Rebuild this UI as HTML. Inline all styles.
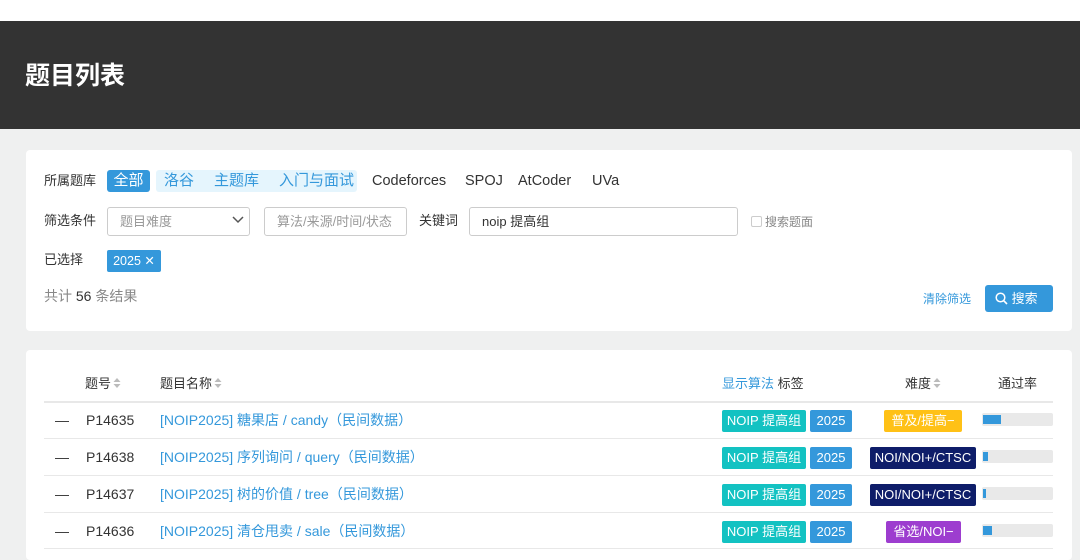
<!DOCTYPE html>
<html><head><meta charset="utf-8"><style>
*{margin:0;padding:0;box-sizing:border-box}
body{width:1080px;height:549px;overflow:hidden;background:#eff0f0;font-family:"Liberation Sans","Noto Sans CJK SC",sans-serif;position:relative;color:#333}
.a{position:absolute;white-space:nowrap;line-height:20px}
.hd{left:0;top:21px;width:1080px;height:108px;background:#333}
.card{background:#fff;border-radius:4px;position:absolute}
.lbl{font-size:13px;color:#333}
.bl{color:#3498db}
.tag{position:absolute;height:22px;line-height:22px;font-size:13px;color:#fff;border-radius:2px;text-align:center}
.inp{position:absolute;border:1px solid #ccc;border-radius:3px;height:29px;line-height:27px;font-size:13px;padding-left:12px;color:#999}
.line{position:absolute;left:44px;width:1009px;height:1px;background:#e8e8e8}
.row{font-size:14px}
.bar{position:absolute;left:982px;width:71px;height:13px;background:#e9e9e9;border-radius:2px}
.bar i{position:absolute;left:1px;top:2px;height:9px;background:#3498db}
.sort{display:inline-block;width:8px;height:12px;vertical-align:-1px;margin-left:2px}
</style></head><body>
<div class="a" style="left:0;top:0;width:1080px;height:21px;background:#fff"></div>
<div class="a hd"></div>
<div class="a" style="left:25px;top:61px;font-size:25px;line-height:30px;font-weight:bold;color:#fff">题目列表</div>

<div class="card" style="left:26px;top:150px;width:1046px;height:181px"></div>
<div class="a lbl" style="left:44px;top:171px">所属题库</div>
<div class="a" style="left:107px;top:170px;width:43px;height:22px;background:#3498db;border-radius:3px;color:#fff;font-size:15px;line-height:22px;text-align:center">全部</div>
<div class="a" style="left:156px;top:170px;width:201px;height:22px;background:#e5f5fd;border-radius:3px"></div>
<div class="a bl" style="left:164px;top:171px;font-size:15px">洛谷</div>
<div class="a bl" style="left:214px;top:171px;font-size:15px">主题库</div>
<div class="a bl" style="left:279px;top:171px;font-size:15px">入门与面试</div>
<div class="a" style="left:372px;top:171px;font-size:14.5px;color:#333">Codeforces</div>
<div class="a" style="left:465px;top:171px;font-size:14.5px;color:#333">SPOJ</div>
<div class="a" style="left:518px;top:171px;font-size:14.5px;color:#333">AtCoder</div>
<div class="a" style="left:592px;top:171px;font-size:14.5px;color:#333">UVa</div>

<div class="a lbl" style="left:44px;top:211px">筛选条件</div>
<div class="inp" style="left:107px;top:207px;width:143px;padding-left:12px">题目难度</div>
<svg class="a" style="left:232px;top:215px" width="12" height="10"><path d="M1 2l5 5 5-5" stroke="#555" stroke-width="1.5" fill="none"/></svg>
<div class="inp" style="left:264px;top:207px;width:143px">算法/来源/时间/状态</div>
<div class="a lbl" style="left:419px;top:211px">关键词</div>
<div class="inp" style="left:469px;top:207px;width:269px;color:#333">noip 提高组</div>
<div class="a" style="left:751px;top:216px;width:11px;height:11px;border:1px solid #ccc;border-radius:2px"></div>
<div class="a" style="left:765px;top:212px;font-size:12px;color:#888">搜索题面</div>

<div class="a lbl" style="left:44px;top:250px">已选择</div>
<div class="tag" style="left:107px;top:250px;width:54px;background:#3498db;font-size:12.5px">2025 ✕</div>
<div class="a" style="left:44px;top:286px;font-size:14px;color:#888">共计 <span style="color:#333">56</span> 条结果</div>
<div class="a bl" style="left:923px;top:289px;font-size:12px">清除筛选</div>
<div class="a" style="left:985px;top:285px;width:68px;height:27px;background:#3498db;border-radius:3px;color:#fff;font-size:13px;line-height:27px;padding-left:10px"><svg width="13" height="13" style="vertical-align:-2px"><circle cx="5.5" cy="5.5" r="4.3" stroke="#fff" stroke-width="1.5" fill="none"/><path d="M8.6 8.6l3.4 3.4" stroke="#fff" stroke-width="1.6"/></svg> 搜索</div>

<div class="card" style="left:26px;top:350px;width:1046px;height:210px"></div>
<svg width="0" height="0" style="position:absolute"><defs><g id="s"><path d="M4 1l3.5 4h-7z M4 11l3.5-4h-7z" fill="#bbb"/></g></defs></svg>
<div class="a" style="left:85px;top:374px;font-size:13px">题号<svg class="sort" viewBox="0 0 8 12"><use href="#s"/></svg></div>
<div class="a" style="left:160px;top:374px;font-size:13px">题目名称<svg class="sort" viewBox="0 0 8 12"><use href="#s"/></svg></div>
<div class="a" style="left:722px;top:374px;font-size:13px"><span class="bl">显示算法</span> 标签</div>
<div class="a" style="left:905px;top:374px;font-size:13px">难度<svg class="sort" viewBox="0 0 8 12"><use href="#s"/></svg></div>
<div class="a" style="left:998px;top:374px;font-size:13px">通过率</div>
<div class="line" style="top:401px;height:2px"></div>
<div class="line" style="top:438px"></div>
<div class="line" style="top:475px"></div>
<div class="line" style="top:512px"></div>
<div class="line" style="top:548px"></div>

<div class="a row" style="left:55px;top:410px">—</div><div class="a row" style="left:86px;top:410px">P14635</div><div class="a row bl" style="left:160px;top:410px">[NOIP2025] 糖果店 / candy（民间数据）</div>
<div class="a row" style="left:55px;top:447px">—</div><div class="a row" style="left:86px;top:447px">P14638</div><div class="a row bl" style="left:160px;top:447px">[NOIP2025] 序列询问 / query（民间数据）</div>
<div class="a row" style="left:55px;top:484px">—</div><div class="a row" style="left:86px;top:484px">P14637</div><div class="a row bl" style="left:160px;top:484px">[NOIP2025] 树的价值 / tree（民间数据）</div>
<div class="a row" style="left:55px;top:521px">—</div><div class="a row" style="left:86px;top:521px">P14636</div><div class="a row bl" style="left:160px;top:521px">[NOIP2025] 清仓甩卖 / sale（民间数据）</div>

<div class="tag" style="left:722px;top:410px;width:84px;background:#13c2c2">NOIP 提高组</div><div class="tag" style="left:810px;top:410px;width:42px;background:#3498db">2025</div>
<div class="tag" style="left:722px;top:447px;width:84px;background:#13c2c2">NOIP 提高组</div><div class="tag" style="left:810px;top:447px;width:42px;background:#3498db">2025</div>
<div class="tag" style="left:722px;top:484px;width:84px;background:#13c2c2">NOIP 提高组</div><div class="tag" style="left:810px;top:484px;width:42px;background:#3498db">2025</div>
<div class="tag" style="left:722px;top:521px;width:84px;background:#13c2c2">NOIP 提高组</div><div class="tag" style="left:810px;top:521px;width:42px;background:#3498db">2025</div>

<div class="tag" style="left:884px;top:410px;width:78px;background:#ffc116">普及/提高−</div>
<div class="tag" style="left:870px;top:447px;width:106px;background:#0e1d69">NOI/NOI+/CTSC</div>
<div class="tag" style="left:870px;top:484px;width:106px;background:#0e1d69">NOI/NOI+/CTSC</div>
<div class="tag" style="left:886px;top:521px;width:75px;background:#9d3dcf">省选/NOI−</div>

<div class="bar" style="top:413px"><i style="width:18px"></i></div>
<div class="bar" style="top:450px"><i style="width:5px"></i></div>
<div class="bar" style="top:487px"><i style="width:3px"></i></div>
<div class="bar" style="top:524px"><i style="width:9px"></i></div>
</body></html>
